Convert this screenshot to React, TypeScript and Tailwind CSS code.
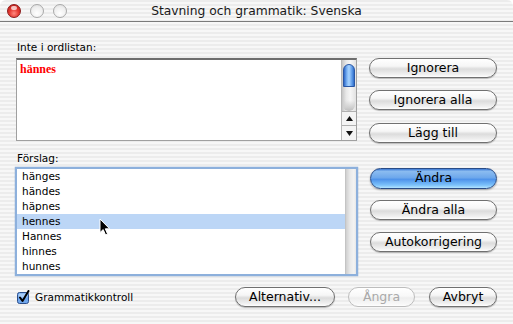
import React from 'react';

const pinstripe =
  'bg-[image:repeating-linear-gradient(180deg,#ececec_0px,#ececec_2px,#f7f7f7_2px,#f7f7f7_4px)]';

type Variant = 'normal' | 'default' | 'disabled';

function AquaButton({ children, variant = 'normal', className = '' }: { children: React.ReactNode; variant?: Variant; className?: string }) {
  const look =
    variant === 'default'
      ? 'border-[#2a4c86] text-black bg-[image:linear-gradient(180deg,#3a78d4_0%,#8bbcf0_12%,#6ea8ec_45%,#4f93ea_55%,#7cc2fb_85%,#b4e4ff_100%)] shadow-[0_1px_2px_rgba(0,0,0,0.35)]'
      : variant === 'disabled'
      ? 'border-[#bdbdbd] text-[#a9a9a9] bg-[image:linear-gradient(180deg,#ffffff_0%,#f8f8f8_45%,#eeeeee_55%,#f8f8f8_90%,#ffffff_100%)]'
      : 'border-[#707070] text-black bg-[image:linear-gradient(180deg,#ffffff_0%,#f6f6f6_40%,#e4e4e4_50%,#dcdcdc_56%,#f2f2f2_88%,#ffffff_100%)] shadow-[0_1px_1px_rgba(0,0,0,0.25)]';
  return (
    <div className={`h-[20px] rounded-full border flex items-center justify-center text-[12.5px] leading-none ${look} ${className}`}>
      {children}
    </div>
  );
}

function Light({ red }: { red?: boolean }) {
  return red ? (
    <div className="w-[14px] h-[14px] rounded-full border border-[#8c1a1a] bg-[image:radial-gradient(circle_at_50%_70%,#ff8a80_0%,#e63a32_45%,#b51a16_100%)] relative">
      <div className="absolute left-[3px] top-[1px] w-[6px] h-[4px] rounded-full bg-white/70" />
    </div>
  ) : (
    <div className="w-[14px] h-[14px] rounded-full border border-[#a9a9a9] bg-[image:radial-gradient(circle_at_50%_70%,#ffffff_0%,#eeeeee_60%,#d8d8d8_100%)]" />
  );
}

const suggestions = ['hänges', 'händes', 'häpnes', 'hennes', 'Hannes', 'hinnes', 'hunnes'];

export default function App() {
  return (
    <div className="w-[513px] h-[324px] bg-white overflow-hidden font-['DejaVu_Sans',sans-serif] text-black">
      <div className={`w-full h-full rounded-t-[6px] flex flex-col ${pinstripe}`}>
        {/* title bar */}
        <div className="relative h-[22px] border-b border-[#7a7a7a] flex items-center shrink-0">
          <div className="flex gap-[9px] pl-[7px] pt-[1px]">
            <Light red />
            <Light />
            <Light />
          </div>
          <div className="absolute inset-0 flex items-center justify-center text-[12.3px] text-[#1a1a1a] pt-[1px]">
            Stavning och grammatik: Svenska
          </div>
        </div>

        <div className="px-[16px] flex flex-col">
          <div className="mt-[19px] h-[13px] text-[10.5px] leading-[13px] pl-[1px]">Inte i ordlistan:</div>

          <div className="mt-[4px] flex">
            {/* not-in-dictionary box */}
            <div className="w-[341px] h-[83px] flex bg-white border border-[#a0a0a0] border-t-[#6e6e6e] border-t-2">
              <div className="flex-1 pl-[3px] pt-[2px] font-['Liberation_Serif',serif] font-bold text-[12px] leading-[14px] text-[#ff0000]">
                hännes
              </div>
              <div className="w-[15px] border-l border-[#b8b8b8] flex flex-col bg-[image:linear-gradient(90deg,#c6c6c6_0%,#e8e8e8_30%,#f6f6f6_60%,#e2e2e2_100%)]">
                <div className="mt-[4px] mx-[1px] h-[23px] rounded-t-full rounded-b-[5px] border border-[#2a57a4] bg-[image:linear-gradient(90deg,#2d68c8_0%,#7fb6f5_30%,#a8d4ff_50%,#5d9ae8_80%,#2f6cc8_100%)]" />
                <div className="flex-1 mx-[1px] rounded-b-full bg-[image:linear-gradient(180deg,transparent_0%,transparent_55%,#d0d0d0_85%,#bdbdbd_100%)]" />
                <div className="h-[14px] flex items-center justify-center border-t border-[#b0b0b0] bg-[#f4f4f4]">
                  <svg width="7" height="5" viewBox="0 0 7 5"><path d="M3.5 0 L7 5 L0 5 Z" fill="#111" /></svg>
                </div>
                <div className="h-[15px] flex items-center justify-center border-t border-[#b0b0b0] bg-[#f4f4f4]">
                  <svg width="7" height="5" viewBox="0 0 7 5"><path d="M0 0 L7 0 L3.5 5 Z" fill="#111" /></svg>
                </div>
              </div>
            </div>

            <div className="ml-[12px] w-[128px] flex flex-col">
              <AquaButton>Ignorera</AquaButton>
              <AquaButton className="mt-[12px]">Ignorera alla</AquaButton>
              <AquaButton className="mt-[13px]">Lägg till</AquaButton>
            </div>
          </div>

          <div className="mt-[9px] h-[13px] text-[10.5px] leading-[13px] pl-[1px]">Förslag:</div>

          <div className="mt-[2px] flex">
            {/* suggestions list */}
            <div className="relative -ml-[1px] w-[343px] h-[109px] border-2 border-[#8db0dc] bg-white flex shadow-[0_0_1px_#5f8cc8]">
              <div className="flex-1 flex flex-col">
                {suggestions.map((s) => (
                  <div
                    key={s}
                    className={`h-[15px] pl-[5px] text-[10.5px] leading-[15px] ${s === 'hennes' ? 'bg-[#bcd6f6]' : ''}`}
                  >
                    {s}
                  </div>
                ))}
              </div>
              <div className="w-[11px] border-l border-[#c4c4c4] bg-[image:linear-gradient(90deg,#cfcfcf_0%,#e9e9e9_40%,#f3f3f3_80%,#e6e6e6_100%)]" />
              {/* mouse pointer */}
              <svg className="absolute left-[82px] top-[49px]" width="12" height="18" viewBox="0 0 12 18">
                <path d="M1 1 L1 14.5 L4.2 11.6 L6.6 17 L8.6 16.1 L6.3 10.8 L10.6 10.8 Z" fill="#000" stroke="#fff" strokeWidth="1" strokeLinejoin="round" />
              </svg>
            </div>

            <div className="ml-[12px] w-[127px] flex flex-col pt-[1px]">
              <AquaButton variant="default" className="h-[21px]">Ändra</AquaButton>
              <AquaButton className="mt-[11px]">Ändra alla</AquaButton>
              <AquaButton className="mt-[12px]">Autokorrigering</AquaButton>
            </div>
          </div>

          <div className="mt-[11px] flex items-center">
            <div className="flex items-center pl-[1px]">
              <svg width="14" height="14" viewBox="0 0 14 14">
                <rect x="0.5" y="2.5" width="11" height="11" rx="2" fill="#6fa6ec" stroke="#2c4f8c" />
                <rect x="1.5" y="3.5" width="9" height="4" rx="1.5" fill="#a9cdf7" />
                <path d="M3 7.5 L5.5 11 L11.5 1" fill="none" stroke="#000" strokeWidth="2" strokeLinecap="round" strokeLinejoin="round" />
              </svg>
              <span className="ml-[4px] text-[10.5px] leading-[13px]">Grammatikkontroll</span>
            </div>
            <AquaButton className="ml-auto w-[100px]">Alternativ...</AquaButton>
            <AquaButton variant="disabled" className="ml-[13px] w-[67px]">Ångra</AquaButton>
            <AquaButton className="ml-[14px] w-[68px]">Avbryt</AquaButton>
          </div>
        </div>
      </div>
    </div>
  );
}
